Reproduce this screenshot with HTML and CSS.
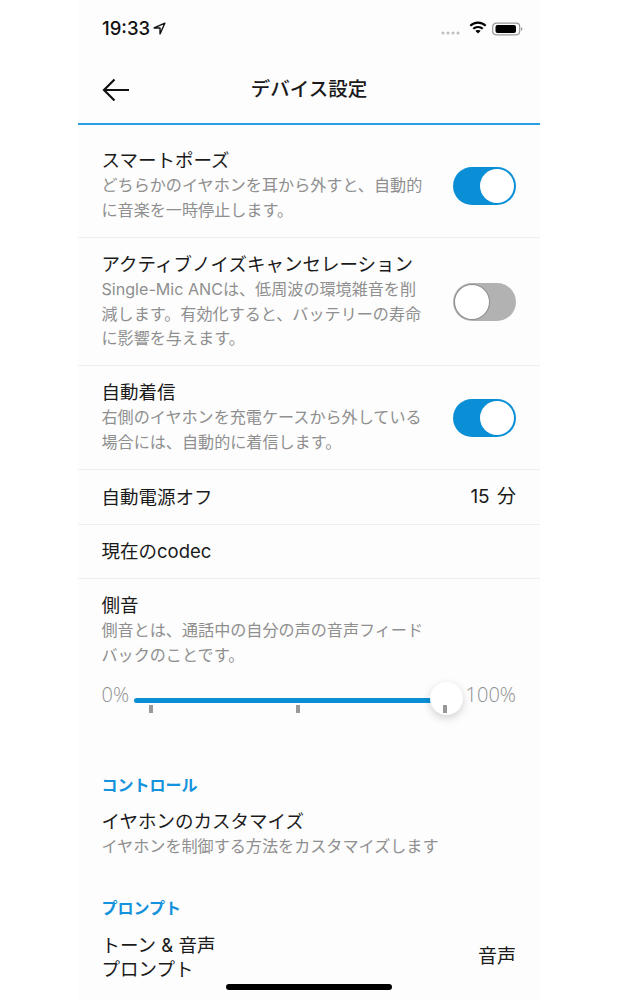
FILE: index.html
```html
<!DOCTYPE html>
<html lang="ja">
<head>
<meta charset="utf-8">
<title>デバイス設定</title>
<link rel="stylesheet" href="styles.css">
</head>
<body>
<main class="phone">
  <div class="status">
    <div class="time">19:33
      <svg class="loc" viewBox="0 0 12 12" width="13" height="13"><path d="M11 1 1 5.500h5.500V11z" fill="none" stroke="#111" stroke-width="1.300" stroke-linejoin="round"/></svg>
    </div>
    <div class="status-right">
      <svg class="dots" width="20" height="4" viewBox="0 0 20 4"><g fill="#bdbdbd"><circle cx="2" cy="2" r="1.500"/><circle cx="7" cy="2" r="1.500"/><circle cx="12" cy="2" r="1.500"/><circle cx="17" cy="2" r="1.500"/></g></svg>
      <svg class="wifi" width="17" height="14" viewBox="0 0 18 14"><path d="M.6 4.600C2.800 2.400 5.800 1 9 1s6.200 1.400 8.400 3.600L16 6.100A10.800 10.800 0 0 0 9 3.300 10.800 10.800 0 0 0 2 6.100z" fill="#000"/><path d="M3.500 7.500A8 8 0 0 1 9 5.400a8 8 0 0 1 5.500 2.100l-1.500 1.500A5.700 5.700 0 0 0 9 7.500a5.700 5.700 0 0 0-4 1.500z" fill="#000"/><path d="M6.300 10.300A4 4 0 0 1 9 9.400a4 4 0 0 1 2.700.9L9 13z" fill="#000"/></svg>
      <svg class="batt" width="31" height="14" viewBox="0 0 31 14"><rect x=".7" y="1.200" width="27" height="11.600" rx="3.500" fill="none" stroke="#999" stroke-width="1.200"/><rect x="3.500" y="3" width="20.500" height="8" rx="2" fill="#000"/><path d="M29 5.200v3.600c.9-.3 1.500-1 1.500-1.800s-.6-1.500-1.500-1.800z" fill="#999"/></svg>
    </div>
  </div>

  <header class="topbar">
    <svg class="back" width="28" height="24" viewBox="0 0 28 24"><path d="M27 12H2M12.500 1.500 2 12l10.500 10.500" fill="none" stroke="#111" stroke-width="2.200"/></svg>
    <h1>デバイス設定</h1>
  </header>

  <section class="row row-toggle row-first">
    <div class="copy">
      <div class="title">スマートポーズ</div>
      <p class="sub">どちらかのイヤホンを耳から外すと、自動的<br>に音楽を一時停止します。</p>
    </div>
    <span class="toggle on"><i></i></span>
  </section>

  <section class="row row-toggle row-long">
    <div class="copy">
      <div class="title">アクティブノイズキャンセレーション</div>
      <p class="sub">Single-Mic ANCは、低周波の環境雑音を削<br>減します。有効化すると、バッテリーの寿命<br>に影響を与えます。</p>
    </div>
    <span class="toggle off"><i></i></span>
  </section>

  <section class="row row-toggle">
    <div class="copy">
      <div class="title">自動着信</div>
      <p class="sub">右側のイヤホンを充電ケースから外している<br>場合には、自動的に着信します。</p>
    </div>
    <span class="toggle on"><i></i></span>
  </section>

  <section class="row row-value"><div class="title">自動電源オフ</div><div class="title value">15 分</div></section>
  <section class="row row-value"><div class="title">現在のcodec</div></section>

  <section class="sidetone">
    <div class="title">側音</div>
    <p class="sub">側音とは、通話中の自分の声の音声フィード<br>バックのことです。</p>
    <div class="slider">
      <span class="pct">0%</span>
      <div class="track">
        <div class="line"></div>
        <div class="knob"></div>
        <div class="ticks"><i></i><i></i><i></i></div>
      </div>
      <span class="pct">100%</span>
    </div>
  </section>

  <h2 class="group group-control">コントロール</h2>
  <div class="plain">
    <div class="title">イヤホンのカスタマイズ</div>
    <p class="sub">イヤホンを制御する方法をカスタマイズします</p>
  </div>

  <h2 class="group group-prompt">プロンプト</h2>
  <div class="prompt-row">
    <div class="title">トーン &amp; 音声<br>プロンプト</div>
    <div class="title value">音声</div>
  </div>

  <div class="home"></div>
</main>
</body>
</html>
```
FILE: styles.css
```css
* { box-sizing: border-box; }
html, body { margin: 0; height: 1000px; overflow: hidden; background: #fff; }
body { font-family: Inter, "Noto Sans CJK JP", sans-serif; color: #1a1a1a; }
.phone { position: relative; width: 462px; height: 1000px; margin-left: 78px; background: #fdfdfd; overflow: hidden; }
.status { height: 58px; padding: 18px 24px 0; display: flex; justify-content: space-between; align-items: flex-start; }
.time { font: 500 18.500px/21px Inter, sans-serif; color: #111; display: flex; align-items: center; gap: 3px; }
.status-right { display: flex; align-items: center; gap: 0; height: 21px; margin-right: -7px; }
.dots { margin: 9px 8px 0 0; }
.wifi { margin: -2px 5px 0 0; width: 18px; height: 15px; }
.topbar { height: 67px; border-bottom: 2px solid #2a9ee0; display: flex; align-items: center; justify-content: center; position: relative; padding-bottom: 5px; }
.back { position: absolute; left: 24px; top: 20px; }
h1 { margin: 0; font: 500 19.500px/26px "Noto Sans CJK JP", sans-serif; color: #1a1a1a; }
.title { font: 400 18.500px/26px Inter, "Noto Sans CJK JP", sans-serif; color: #1a1a1a; white-space: nowrap; }
.title.value { font-size: 19px; word-spacing: 2px; }
.sub { margin: 0; font: 400 16.100px/24.500px Inter, "Noto Sans CJK JP", sans-serif; color: #8f8f8f; white-space: nowrap; }
.row { border-bottom: 1px solid #efefef; padding: 0 24px 0 23.500px; display: flex; justify-content: space-between; }
.row-toggle { padding-top: 13px; padding-bottom: 15px; align-items: center; }
.row-first { padding-top: 22px; }
.row-long { padding-bottom: 14.500px; }
.copy { width: 324px; }
.row-value { height: 54.500px; align-items: center; }
.toggle { width: 63px; height: 38px; border-radius: 19px; display: block; position: relative; flex: none; margin-top: 3px; }
.toggle i { position: absolute; top: 2px; width: 34px; height: 34px; border-radius: 50%; background: #fff; }
.toggle.on { background: #0a8fd6; }
.toggle.on i { right: 2px; }
.toggle.off { background: #b2b2b2; }
.toggle.off i { left: 1.500px; box-shadow: 0 0 0 1px #8e8e8e; }
.sidetone { padding: 13px 24px 0 23.500px; }
.slider { display: flex; align-items: flex-start; margin-top: 16px; height: 34px; }
.pct { font: 300 20px/26px "Open Sans", sans-serif; color: #8f8f8f; margin-top: -1px; }
.track { position: relative; flex: 1; height: 34px; margin: 0 3px 0 4px; }
.line { position: absolute; left: 1px; right: 15px; top: 15px; height: 5px; border-radius: 3px; background: #0a8fd6; }
.ticks { position: absolute; left: 15.500px; right: 15.300px; top: 22px; display: flex; justify-content: space-between; }
.ticks i { width: 4px; height: 8px; background: #999; display: block; }
.knob { position: absolute; right: 0; top: -1px; width: 33px; height: 33px; border-radius: 50%; background: #fff; box-shadow: 0 3px 8px rgba(0,0,0,.18); }
.group { margin: 0; padding: 0 24px 0 23.500px; font: 700 16px/22px "Noto Sans CJK JP", sans-serif; color: #1592dc; }
.group-control { margin-top: 56px; }
.plain { padding: 13px 24px 0 23.500px; }
.group-prompt { margin-top: 37px; }
.prompt-row { padding: 15px 24px 0 23.500px; display: flex; justify-content: space-between; align-items: center; }
.prompt-row .title { line-height: 24px; }
.home { position: absolute; left: 148px; bottom: 10px; width: 166px; height: 6px; border-radius: 3px; background: #000; }
```
